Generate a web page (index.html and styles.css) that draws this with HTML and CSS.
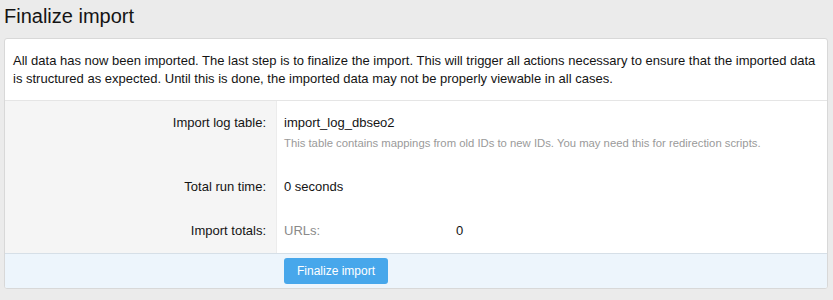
FILE: index.html
```html
<!DOCTYPE html>
<html lang="en">

<head>
    <meta charset="UTF-8">
    <meta name="viewport" content="width=device-width, initial-scale=1">
    <title>Finalize import</title>
    <link rel="stylesheet" href="styles.css">
</head>

<body>
    <div class="page">
        <h1>Finalize import</h1>

        <div class="block">
            <div class="block-intro">
                All data has now been imported. The last step is to finalize the import. This will trigger all actions necessary to ensure that the imported data is structured as expected. Until this is done, the imported data may not be properly viewable in all cases.
            </div>

            <div class="form-row">
                <div class="form-label">Import log table:</div>
                <div class="form-value">
                    import_log_dbseo2
                    <div class="hint">This table contains mappings from old IDs to new IDs. You may need this for redirection scripts.</div>
                </div>
            </div>

            <div class="form-row">
                <div class="form-label">Total run time:</div>
                <div class="form-value">0 seconds</div>
            </div>

            <div class="form-row">
                <div class="form-label">Import totals:</div>
                <div class="form-value">
                    <div class="pair">
                        <span class="pair-key">URLs:</span>
                        <span>0</span>
                    </div>
                </div>
            </div>

            <div class="form-submit">
                <div class="submit-spacer"></div>
                <button type="button">Finalize import</button>
            </div>
        </div>
    </div>
</body>

</html>
```

FILE: styles.css
```css
body {
    font-family: "Liberation Sans", Arial, sans-serif;
    background: #ebebeb;
    color: #141414;
    margin: 0;
    padding: 0;
}

.page {
    padding: 4px 5px 0 4px;
}

h1 {
    font-size: 20px;
    font-weight: normal;
    line-height: 24px;
    margin: 0 0 10px;
    color: #141414;
}

.block {
    background: #fff;
    border: 1px solid #d8d8d8;
    border-radius: 3px;
    overflow: hidden;
}

.block-intro {
    font-size: 13px;
    line-height: 18px;
    padding: 13px 8px 12px 8px;
    border-bottom: 1px solid #e5e5e5;
}

.form-row {
    display: flex;
    font-size: 13px;
    line-height: 18px;
}

.form-label {
    width: 261px;
    flex: none;
    background: #f5f5f5;
    border-right: 1px solid #ececec;
    text-align: right;
    padding: 13px 10px 13px 0;
}

.form-value {
    flex: 1;
    padding: 13px 7px;
}

.hint {
    font-size: 11.3px;
    color: #9a9a9a;
    margin-top: 2px;
}

.pair {
    display: flex;
}

.pair-key {
    width: 172px;
    color: #8a8a8a;
}

.form-submit {
    display: flex;
    background: #edf5fc;
    border-top: 1px solid #d6dfe7;
    padding: 4px 0;
}

.submit-spacer {
    width: 279px;
    flex: none;
}

button {
    font-family: "Liberation Sans", Arial, sans-serif;
    font-size: 12px;
    height: 26px;
    padding: 0 13px;
    background: #47a7eb;
    color: #fff;
    border: none;
    border-radius: 3px;
}
```
